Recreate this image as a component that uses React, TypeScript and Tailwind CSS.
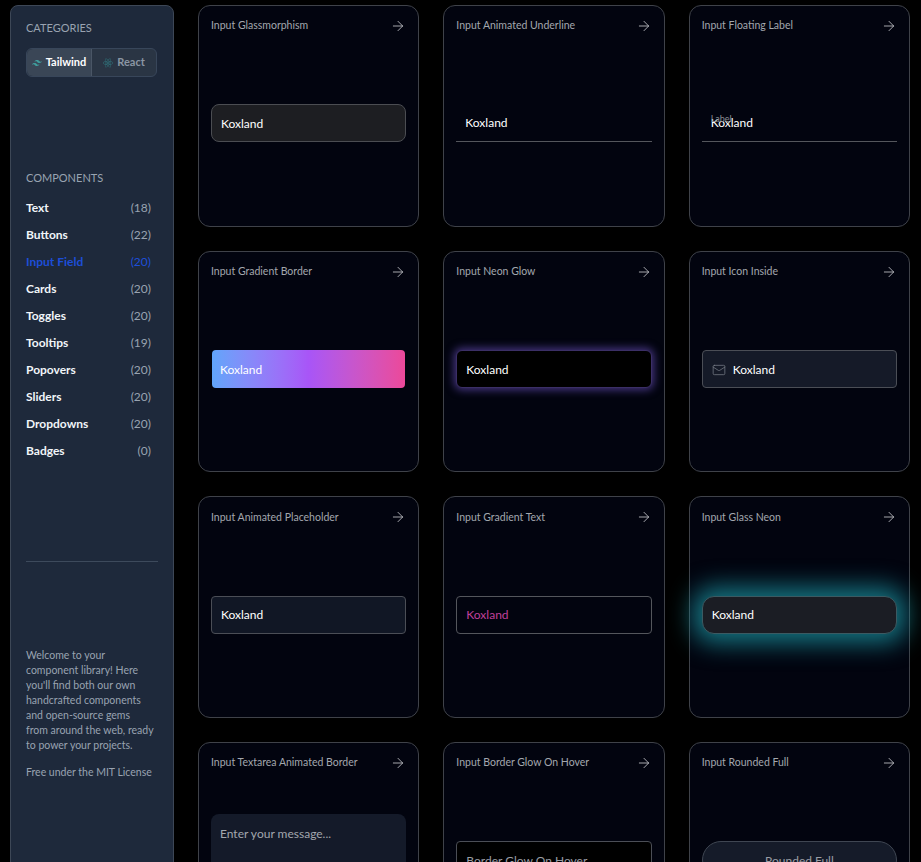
import React from 'react';
import { ArrowRight, Mail } from 'lucide-react';
import { SiTailwindcss, SiReact } from 'react-icons/si';

const navItems = [
  { label: 'Text', count: 18 },
  { label: 'Buttons', count: 22 },
  { label: 'Input Field', count: 20, active: true },
  { label: 'Cards', count: 20 },
  { label: 'Toggles', count: 20 },
  { label: 'Tooltips', count: 19 },
  { label: 'Popovers', count: 20 },
  { label: 'Sliders', count: 20 },
  { label: 'Dropdowns', count: 20 },
  { label: 'Badges', count: 0 },
];

const Sidebar = () => (
  <aside className="w-[164px] h-[900px] shrink-0 rounded-t-lg border border-[#3d4756] bg-[#1e293b] px-[15px] pt-[14px] flex flex-col">
    <h2 className="text-[11px] leading-4 text-[#99a3b1] uppercase">Categories</h2>
    <div className="mt-3 flex h-[29px] w-[131px] rounded-md border border-[#38465a] bg-[#2a3544] text-[11px] font-bold">
      <div className="flex w-[65px] items-center justify-center gap-1 rounded-l-md border-r border-[#4a5666] bg-[#3a4656] text-white">
        <SiTailwindcss className="w-2.5 h-2.5 text-[#3f9c9c]" />
        Tailwind
      </div>
      <div className="flex flex-1 items-center justify-center gap-1 text-[#8b95a3]">
        <SiReact className="w-2.5 h-2.5 text-[#2f6f78]" />
        React
      </div>
    </div>
    <h2 className="mt-[93px] text-[11px] leading-4 text-[#99a3b1] uppercase">Components</h2>
    <ul className="mt-2 pr-[7px]">
      {navItems.map((item) => (
        <li
          key={item.label}
          className={`flex h-[27px] items-center justify-between text-xs ${item.active ? 'text-[#1d4ed8]' : 'text-[#f1f5f9]'}`}
        >
          <span className="font-bold">{item.label}</span>
          <span className={item.active ? '' : 'text-[#99a3b1]'}>({item.count})</span>
        </li>
      ))}
    </ul>
    <div className="mt-[97px] h-px bg-[#3d4a5c]" />
    <p className="mt-[86px] text-[10.5px] leading-[15px] text-[#99a3b1]">
      Welcome to your component library! Here you'll find both our own handcrafted components and open-source gems
      <br />
      from around the web, ready to power your projects.
    </p>
    <p className="mt-3 text-[10.5px] leading-[15px] text-[#99a3b1]">Free under the MIT License</p>
  </aside>
);

const Card = ({ title, children }: { title: string; children: React.ReactNode }) => (
  <div className="flex h-[221.67px] flex-col rounded-xl border border-[#3f4249] bg-[#02040f] px-3 pt-3 pb-3">
    <div className="flex h-4 items-center justify-between text-[10.5px] text-[#a3a7ae]">
      <span>{title}</span>
      <ArrowRight className="w-4 h-4 text-[#c6c8cc]" strokeWidth={1.25} />
    </div>
    <div className="flex flex-1 flex-col justify-center -mt-px">{children}</div>
  </div>
);

const inputBase = 'flex h-[38px] items-center px-[9px] pt-px text-xs text-white';

export default function App() {
  return (
    <div className="h-[862px] overflow-hidden bg-black pl-2.5 pt-[5.1px] flex gap-6 font-['Lato',sans-serif]">
      <Sidebar />
      <main className="grid w-[712px] grid-cols-3 gap-6 content-start">
        <Card title="Input Glassmorphism">
          <div className={`${inputBase} rounded-lg border border-[#4b4d52] bg-[#1d1e22]`}>Koxland</div>
        </Card>
        <Card title="Input Animated Underline">
          <div className={`${inputBase} border-b border-[#54565c]`}>Koxland</div>
        </Card>
        <Card title="Input Floating Label">
          <div className={`${inputBase} relative border-b border-[#54565c]`}>
            <span className="absolute left-[9px] top-[9px] text-[9px] text-[#8b8e94]">Label</span>
            Koxland
          </div>
        </Card>
        <Card title="Input Gradient Border">
          <div className={`${inputBase} mx-px h-9 rounded bg-gradient-to-r from-[#60a5fa] via-[#a855f7] to-[#ec4899] pl-2`}>Koxland</div>
        </Card>
        <Card title="Input Neon Glow">
          <div className={`${inputBase} rounded-md border border-[#3b2f66] bg-black shadow-[0_0_8px_2px_rgba(124,92,220,0.55)]`}>Koxland</div>
        </Card>
        <Card title="Input Icon Inside">
          <div className={`${inputBase} gap-[7px] rounded border border-[#4b4e56] bg-[#151a28]`}>
            <Mail className="w-[14px] h-[14px] text-[#7b808a]" strokeWidth={1.25} />
            Koxland
          </div>
        </Card>
        <Card title="Input Animated Placeholder">
          <div className={`${inputBase} rounded border border-[#4b4e56] bg-[#111725]`}>Koxland</div>
        </Card>
        <Card title="Input Gradient Text">
          <div className={`${inputBase} rounded border border-[#54565c]`}>
            <span className="text-[#c0409a]">Koxland</span>
          </div>
        </Card>
        <Card title="Input Glass Neon">
          <div className={`${inputBase} rounded-xl border border-[#3b5a62] bg-[#1b1d24] shadow-[0_0_24px_9px_rgba(30,165,180,0.7)]`}>Koxland</div>
        </Card>
        <Card title="Input Textarea Animated Border">
          <div className="h-[92px] rounded-lg bg-[#141a29] px-[9px] py-[12px] text-xs text-[#a3a7ae]">Enter your message...</div>
        </Card>
        <Card title="Input Border Glow On Hover">
          <div className={`${inputBase} rounded-sm border border-[#4b4e56] bg-black !text-[#9a9ea5]`}>Border Glow On Hover</div>
        </Card>
        <Card title="Input Rounded Full">
          <div className={`${inputBase} justify-center rounded-full border border-[#3f4652] bg-[#151b29] !text-[#9a9ea5]`}>Rounded Full</div>
        </Card>
      </main>
    </div>
  );
}
